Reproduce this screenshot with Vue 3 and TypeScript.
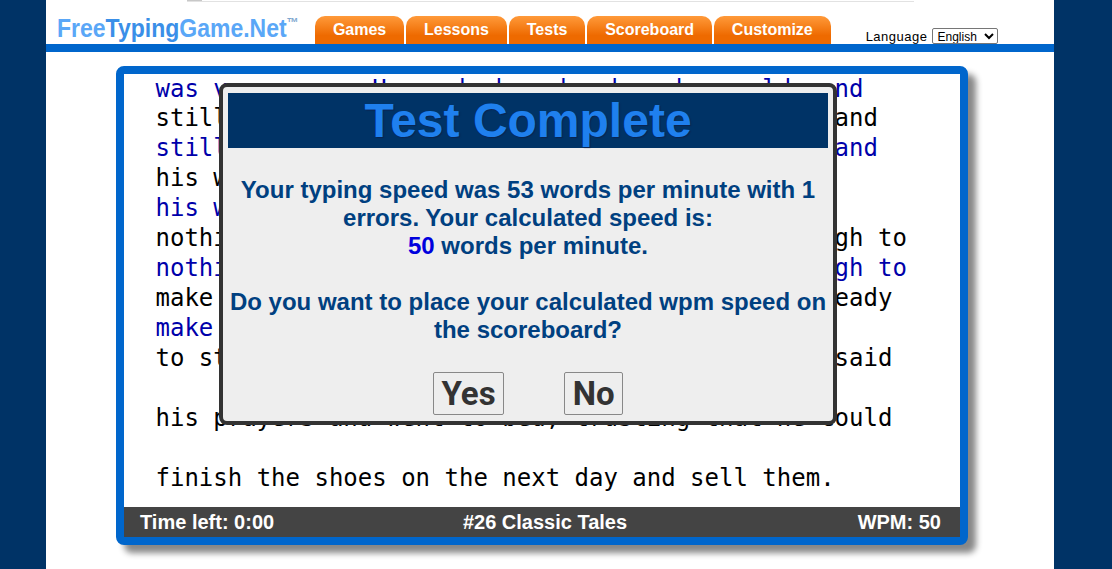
<script setup lang="ts">
interface Row { text: string; typed: boolean }
const rows: Row[] = [
  { text: 'was very poor. He so had on hand no hose olds and', typed: true },
  { text: 'still he worked and worked and worked all days and', typed: false },
  { text: 'still he worked and worked and worked all days and', typed: true },
  { text: 'his work brought in very little money, not', typed: false },
  { text: 'his work brought in very little money, not', typed: true },
  { text: 'nothing he could do would really bring him enough to', typed: false },
  { text: 'nothing he could do would really bring him enough to', typed: true },
  { text: 'make a living. He was so poor that he was now ready', typed: false },
  { text: 'make a living. He was so poor that he was', typed: true },
  { text: 'to stitch a new pair. One night, the shoemaker said', typed: false },
  { text: ' ', typed: true },
  { text: 'his prayers and went to bed, trusting that he could', typed: false },
  { text: ' ', typed: true },
  { text: 'finish the shoes on the next day and sell them.', typed: false },
]
const tabs: string[] = ['Games', 'Lessons', 'Tests', 'Scoreboard', 'Customize']
</script>

<template>
  <div class="page">
    <div class="strip"><span class="strip-block"></span></div>
    <header class="header">
      <div class="logo-wrap">
        <div class="logo">Free<span class="logo-mid">Typing</span>Game.Net<sup class="tm">™</sup></div>
      </div>
      <nav class="tabs">
        <a v-for="tab in tabs" :key="tab" class="tab">{{ tab }}</a>
      </nav>
      <label class="lang">Language
        <select class="lang-select"><option>English</option></select>
      </label>
    </header>
    <div class="rule"></div>
    <main class="game">
      <div class="text">
        <div v-for="(row, i) in rows" :key="i" class="row" :class="{ typed: row.typed }">{{ row.text }}</div>
      </div>
      <div class="status">
        <span>Time left: 0:00</span>
        <span>#26 Classic Tales</span>
        <span class="wpm">WPM: 50</span>
      </div>
      <section class="modal">
        <h1 class="modal-title">Test Complete</h1>
        <p class="modal-msg">Your typing speed was 53 words per minute with 1 errors. Your calculated speed is:<br><b class="score">50</b> words per minute.<br><br>Do you want to place your calculated wpm speed on the scoreboard?</p>
        <div class="actions">
          <button class="btn">Yes</button>
          <button class="btn">No</button>
        </div>
      </section>
    </main>
  </div>
</template>

<style>
html, body { background: #003366; overflow: hidden; }
</style>

<style scoped>
.page {
  width: 1008px;
  height: 569px;
  margin-left: 46px;
  background: #fff;
  font-family: "Liberation Sans", Arial, sans-serif;
  overflow: hidden;
}
.strip {
  display: flex;
  height: 2px;
  margin-left: 141px;
  width: 727px;
  border-bottom: 1px solid #e2e2e2;
  box-sizing: border-box;
}
.strip-block { width: 15px; background: #c8c8c8; }
.header {
  display: flex;
  align-items: flex-end;
  height: 42px;
}
.logo-wrap {
  width: 258px;
  margin-left: 11px;
  align-self: flex-start;
  padding-top: 10px;
  overflow: visible;
}
.logo {
  display: inline-block;
  transform: scaleX(0.92);
  transform-origin: left center;
  font-size: 25px;
  font-weight: 700;
  line-height: 32px;
  color: #5aa7f7;
  white-space: nowrap;
}
.logo-mid { color: #3a8fe8; }
.tm { font-size: 13px; vertical-align: 10px; line-height: 0; color: #7fa8d0; }
.tabs { display: flex; gap: 2px; height: 28px; }
.tab {
  display: flex;
  align-items: center;
  padding: 0 17.9px;
  border-radius: 10px 10px 0 0;
  background: linear-gradient(#ff9a3a, #ee6a00 70%);
  color: #fff;
  font-size: 16px;
  font-weight: 700;
}
.lang {
  display: flex;
  align-items: flex-end;
  gap: 5px;
  margin-left: 35px;
  font-size: 13px;
  line-height: 14px;
  letter-spacing: 0.5px;
  color: #000;
}
.lang-select {
  width: 66px;
  height: 16px;
  padding: 0;
  font-family: "Liberation Sans", Arial, sans-serif;
  font-size: 12px;
  letter-spacing: 0;
  background: #fff;
  border: 1px solid #767676;
  border-radius: 2px;
}
.rule { height: 8px; background: #0066cc; }
.game {
  position: relative;
  box-sizing: border-box;
  width: 852px;
  height: 479px;
  margin: 14px 0 0 70px;
  border: 8px solid #0066cc;
  border-radius: 8px;
  box-shadow: 8px 8px 6px #888;
  background: #fff;
  display: flex;
  flex-direction: column;
}
.text {
  flex: 1;
  min-height: 0;
  overflow: hidden;
  margin-top: -1px;
  padding-left: 31.5px;
  font-family: "DejaVu Sans Mono", monospace;
  font-size: 24px;
  line-height: 30px;
  color: #000;
}
.row { white-space: pre; height: 30px; }
.row:first-child { transform: translateY(1px); }
.row.typed { color: #0000aa; }
.status {
  display: grid;
  grid-template-columns: 1fr auto 1fr;
  align-items: center;
  height: 30px;
  padding: 0 10px 0 16px;
  background: #444;
  color: #fff;
  font-size: 20px;
  font-weight: 700;
}
.wpm { justify-self: end; margin-right: 9px; }
.modal {
  position: absolute;
  left: 95px;
  top: 9px;
  box-sizing: border-box;
  width: 618px;
  height: 342px;
  padding: 6px 5px 0;
  border: 4px solid #333;
  border-radius: 8px;
  background: #eee;
  display: flex;
  flex-direction: column;
  align-items: center;
  text-align: center;
}
.modal-title {
  width: 600px;
  height: 55px;
  margin: 0;
  flex: none;
  background: #003366;
  color: #1f80ee;
  font-size: 48px;
  font-weight: 700;
  line-height: 55px;
  text-shadow: 1px 1px 1px #0a2450;
}
.modal-msg {
  margin: 28px 0 0;
  font-size: 24px;
  font-weight: 700;
  line-height: 28px;
  color: #004080;
}
.score { color: #0000dd; }
.actions {
  display: flex;
  gap: 60px;
  margin-top: 28px;
}
.btn {
  height: 43px;
  padding: 0 7.5px;
  font-family: Roboto, "Liberation Sans", sans-serif;
  font-size: 33px;
  font-weight: 700;
  line-height: 41px;
  color: #333;
  background: #eee;
  border: 1px solid #888;
  border-radius: 2px;
}
</style>
